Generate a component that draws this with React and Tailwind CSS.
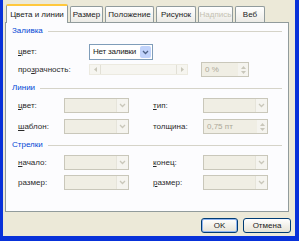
import React from "react";

const tabs = [
  { name: "Цвета и линии", w: "w-[62px]", active: true },
  { name: "Размер", w: "w-[33px]" },
  { name: "Положение", w: "w-[49px]" },
  { name: "Рисунок", w: "w-[40px]" },
  { name: "Надпись", w: "w-[35px]", disabled: true },
  { name: "Веб", w: "w-[30px]" },
];

function Chevron({ color = "#C9C7BA" }) {
  return (
    <svg width="7" height="5" viewBox="0 0 7 5">
      <path d="M1 1 L3.5 3.5 L6 1" stroke={color} strokeWidth="1.3" fill="none" />
    </svg>
  );
}

function Drop({ w = "w-[65px]", h = "h-[15px]" }) {
  return (
    <div className={`${w} ${h} flex border border-[#C9C7BA] bg-[#F0EEE4]`}>
      <div className="flex-1" />
      <div className="w-[12px] flex items-center justify-center bg-[#F5F4EF] border-l border-[#E6E4DA]">
        <Chevron />
      </div>
    </div>
  );
}

function Spin({ w = "w-[65px]", text }) {
  return (
    <div className={`${w} h-[15px] flex border border-[#C9C7BA] bg-[#F0EEE4]`}>
      <div className="flex-1 pl-[3px] text-[8px] leading-[13px] text-[#ACA899] whitespace-nowrap">{text}</div>
      <div className="w-[10px] flex flex-col items-center justify-center gap-[2px] bg-[#F5F4EF]">
        <svg width="5" height="3" viewBox="0 0 5 3">
          <path d="M0 3 L2.5 0 L5 3 Z" fill="#C9C7BA" />
        </svg>
        <svg width="5" height="3" viewBox="0 0 5 3">
          <path d="M0 0 L2.5 3 L5 0 Z" fill="#C9C7BA" />
        </svg>
      </div>
    </div>
  );
}

function Group({ title, className = "" }) {
  return (
    <div className={`flex items-center h-[12px] ${className}`}>
      <span className="text-[8px] text-[#0046D5] leading-none">{title}</span>
      <div className="flex-1 h-px bg-[#D5D3C8] ml-[5px]" />
    </div>
  );
}

function Lbl({ children, w = "w-[46px]" }) {
  return <span className={`${w} text-[8px] text-[#2A2A2A] leading-none whitespace-nowrap`}>{children}</span>;
}

function XpButton({ children, def }) {
  return (
    <button
      className={`h-[15px] rounded-[3px] border border-[#003C74] bg-gradient-to-b from-white to-[#E6E3D6] text-[8px] text-[#1A1A1A] leading-none ${
        def ? "w-[37px] shadow-[inset_0_0_0_1px_#8FB4F0]" : "w-[48px]"
      }`}
    >
      {children}
    </button>
  );
}

export default function App() {
  return (
    <div className="w-[302px] h-[241px] bg-white font-['Liberation_Sans',Arial,sans-serif] flex overflow-hidden">
      <div className="w-[299px] h-[241px] border-l-[3px] border-r-[4px] border-b-[5px] border-[#0831D9] bg-[#ECE9D8] flex flex-col">
        {/* tabs */}
        <div className="flex items-end gap-[2px] pl-[3px] pt-[3px] h-[22px] relative z-10">
          {tabs.map((t) =>
            t.active ? (
              <div
                key={t.name}
                className={`${t.w} h-[19px] -mb-px bg-[#FCFCFE] border border-b-0 border-[#919B9C] border-t-[2px] border-t-[#FFC83C] rounded-t-[2px] flex items-center justify-center text-[8px] text-[#1A1A1A] whitespace-nowrap`}
              >
                {t.name}
              </div>
            ) : (
              <div
                key={t.name}
                className={`${t.w} h-[16px] bg-gradient-to-b from-white to-[#ECEBE6] border border-b-0 border-[#919B9C] rounded-t-[2px] flex items-center justify-center text-[8px] whitespace-nowrap ${
                  t.disabled ? "text-[#C5C2B2]" : "text-[#1A1A1A]"
                }`}
              >
                {t.name}
              </div>
            )
          )}
        </div>

        {/* panel */}
        <div className="ml-[2px] w-[284px] h-[190px] border border-[#919B9C] bg-[#FCFCFE] pt-[2px] pl-[6px] pr-[6px]">
          <Group title="Заливка" />
          <div className="flex items-center h-[16px] mt-[7px] pl-[6px]">
            <Lbl w="w-[71px]">
              <span className="underline">ц</span>вет:
            </Lbl>
            <div className="w-[64px] h-[16px] flex border border-[#7F9DB9] bg-white">
              <div className="flex-1 pl-[3px] text-[8px] tracking-[-0.2px] leading-[14px] text-[#1A1A1A] whitespace-nowrap overflow-hidden">
                Нет заливки
              </div>
              <div className="w-[11px] m-px rounded-[2px] bg-[#C1D3FB] flex items-center justify-center">
                <Chevron color="#4D6185" />
              </div>
            </div>
          </div>
          <div className="flex items-center h-[13px] mt-[3px] pl-[6px]">
            <Lbl w="w-[71px]">
              про<span className="underline">з</span>рачность:
            </Lbl>
            <div className="w-[99px] h-[11px] flex items-center bg-[#F6F5F0] border border-[#ECEAE0]">
              <div className="w-[11px] h-[9px] flex items-center justify-center border-r border-[#E2E0D6]">
                <svg width="3" height="5" viewBox="0 0 3 5">
                  <path d="M3 0 L0 2.5 L3 5 Z" fill="#C9C7BA" />
                </svg>
              </div>
              <div className="flex-1" />
              <div className="w-[11px] h-[9px] flex items-center justify-center border-l border-[#E2E0D6]">
                <svg width="3" height="5" viewBox="0 0 3 5">
                  <path d="M0 0 L3 2.5 L0 5 Z" fill="#C9C7BA" />
                </svg>
              </div>
            </div>
            <div className="ml-[13px]">
              <Spin w="w-[48px]" text="0 %" />
            </div>
          </div>

          <Group title="Линии" className="mt-[6px]" />
          <div className="flex items-center h-[15px] mt-[4px] pl-[6px]">
            <Lbl>
              <span className="underline">ц</span>вет:
            </Lbl>
            <Drop />
            <span className="w-[24px]" />
            <Lbl w="w-[50px]">
              <span className="underline">т</span>ип:
            </Lbl>
            <Drop />
          </div>
          <div className="flex items-center h-[15px] mt-[6px] pl-[6px]">
            <Lbl>
              <span className="underline">ш</span>аблон:
            </Lbl>
            <Drop />
            <span className="w-[24px]" />
            <Lbl w="w-[50px]">толщина:</Lbl>
            <Spin text="0,75 пт" />
          </div>

          <Group title="Стрелки" className="mt-[5px]" />
          <div className="flex items-center h-[15px] mt-[4px] pl-[6px]">
            <Lbl>
              <span className="underline">н</span>ачало:
            </Lbl>
            <Drop />
            <span className="w-[24px]" />
            <Lbl w="w-[50px]">
              <span className="underline">к</span>онец:
            </Lbl>
            <Drop />
          </div>
          <div className="flex items-center h-[15px] mt-[5px] pl-[6px]">
            <Lbl>размер:</Lbl>
            <Drop />
            <span className="w-[24px]" />
            <Lbl w="w-[50px]">
              <span className="underline">р</span>азмер:
            </Lbl>
            <Drop />
          </div>
        </div>

        {/* buttons */}
        <div className="flex justify-end gap-[5px] pr-[4px] mt-[6px]">
          <XpButton def>OK</XpButton>
          <XpButton>Отмена</XpButton>
        </div>
      </div>
    </div>
  );
}
